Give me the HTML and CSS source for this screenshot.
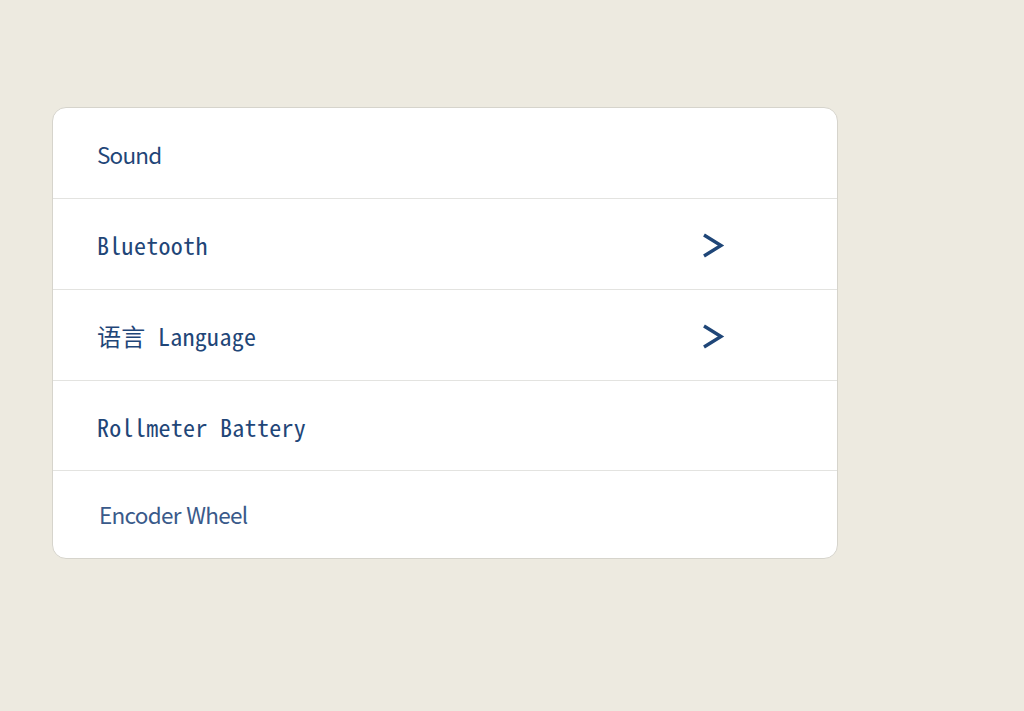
FILE: index.html
```html
<!DOCTYPE html>
<html lang="en">
<head>
<meta charset="utf-8">
<title>Settings</title>
<link rel="stylesheet" href="styles.css">
</head>
<body>
<div class="card">
  <div class="row"><span class="label prop">Sound</span></div>
  <div class="row"><span class="label">Bluetooth</span>
    <svg class="chev" width="24" height="26" viewBox="0 0 24 26"><polyline points="3,2 20,12.5 3,23" fill="none" stroke="#1f4678" stroke-width="3.4" stroke-linejoin="miter"/></svg>
  </div>
  <div class="row"><span class="label">语言 Language</span>
    <svg class="chev" width="24" height="26" viewBox="0 0 24 26"><polyline points="3,2 20,12.5 3,23" fill="none" stroke="#1f4678" stroke-width="3.4" stroke-linejoin="miter"/></svg>
  </div>
  <div class="row r4"><span class="label">Rollmeter Battery</span></div>
  <div class="row last"><span class="label alt">Encoder Wheel</span></div>
</div>
</body>
</html>
```
FILE: styles.css
```css
html, body {
  margin: 0;
  padding: 0;
  background: #edeae0;
}
body {
  padding: 107px 0 0 52px;
}
.card {
  width: 784px;
  background: #ffffff;
  border: 1px solid #d6d4cc;
  border-radius: 14px;
  overflow: hidden;
}
.row {
  height: 90px;
  display: flex;
  align-items: center;
  justify-content: space-between;
  padding: 0 112px 0 44px;
  border-bottom: 1px solid #e3e3e0;
}
.row.r4 {
  height: 89px;
}
.row.last {
  height: 87px;
  border-bottom: none;
}
.label {
  font-family: "Noto Sans Mono CJK SC", "Noto Sans CJK SC", monospace;
  font-size: 24px;
  font-weight: 400;
  letter-spacing: 0.3px;
  color: #1f4678;
  line-height: 1;
  padding-top: 2px;
}
.label.prop {
  font-family: "Noto Sans CJK SC", sans-serif;
  font-size: 22.5px;
  letter-spacing: -0.8px;
  padding-top: 3px;
}
.label.alt {
  font-family: "Noto Sans CJK SC", sans-serif;
  font-size: 22.5px;
  font-weight: 400;
  letter-spacing: -0.7px;
  word-spacing: 1px;
  color: #3a5a8a;
  padding-left: 2px;
  padding-top: 0;
}
.chev {
  display: block;
  margin-top: 4px;
}
```
